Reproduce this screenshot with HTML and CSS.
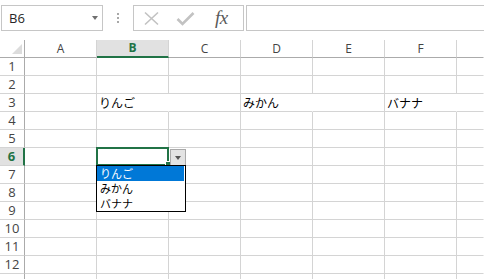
FILE: index.html
```html
<!DOCTYPE html>
<html lang="ja">
<head>
<meta charset="utf-8">
<link rel="stylesheet" href="styles.css">
</head>
<body>
<div class="fbar">
  <div class="namebox"><span class="nb-text">B6</span><span class="nb-caret"></span></div>
  <div class="grip"><i></i><i></i><i></i></div>
  <div class="fbtns">
    <svg class="ic-x" width="17" height="15" viewBox="0 0 17 15"><path d="M2 1.5 L15 13.5 M15 1.5 L2 13.5" stroke="#c2c2c2" stroke-width="1.6" fill="none"/></svg>
    <svg class="ic-ok" width="19" height="15" viewBox="0 0 19 15"><path d="M1.5 8 L6.5 13 L17.5 2" stroke="#c2c2c2" stroke-width="2.6" fill="none"/></svg>
    <span class="fx">fx</span>
  </div>
  <div class="finput"></div>
</div>
<div class="sheet">
  <div class="c corner"><span class="tri"></span></div>
  <div class="c ch">A</div><div class="c ch sel">B</div><div class="c ch">C</div><div class="c ch">D</div><div class="c ch">E</div><div class="c ch">F</div><div class="c ch"></div>

  <div class="c rh">1</div><div class="c"></div><div class="c"></div><div class="c"></div><div class="c"></div><div class="c"></div><div class="c"></div><div class="c"></div>
  <div class="c rh">2</div><div class="c"></div><div class="c"></div><div class="c"></div><div class="c"></div><div class="c"></div><div class="c"></div><div class="c"></div>
  <div class="c rh">3</div><div class="c"></div><div class="c nr">りんご</div><div class="c"></div><div class="c nr">みかん</div><div class="c"></div><div class="c nr">バナナ</div><div class="c"></div>
  <div class="c rh">4</div><div class="c"></div><div class="c"></div><div class="c"></div><div class="c"></div><div class="c"></div><div class="c"></div><div class="c"></div>
  <div class="c rh">5</div><div class="c"></div><div class="c"></div><div class="c"></div><div class="c"></div><div class="c"></div><div class="c"></div><div class="c"></div>
  <div class="c rh sel">6</div><div class="c"></div><div class="c"></div><div class="c"></div><div class="c"></div><div class="c"></div><div class="c"></div><div class="c"></div>
  <div class="c rh">7</div><div class="c"></div><div class="c"></div><div class="c"></div><div class="c"></div><div class="c"></div><div class="c"></div><div class="c"></div>
  <div class="c rh">8</div><div class="c"></div><div class="c"></div><div class="c"></div><div class="c"></div><div class="c"></div><div class="c"></div><div class="c"></div>
  <div class="c rh">9</div><div class="c"></div><div class="c"></div><div class="c"></div><div class="c"></div><div class="c"></div><div class="c"></div><div class="c"></div>
  <div class="c rh">10</div><div class="c"></div><div class="c"></div><div class="c"></div><div class="c"></div><div class="c"></div><div class="c"></div><div class="c"></div>
  <div class="c rh">11</div><div class="c"></div><div class="c"></div><div class="c"></div><div class="c"></div><div class="c"></div><div class="c"></div><div class="c"></div>
  <div class="c rh">12</div><div class="c"></div><div class="c"></div><div class="c"></div><div class="c"></div><div class="c"></div><div class="c"></div><div class="c"></div>
  <div class="c rh"></div><div class="c"></div><div class="c"></div><div class="c"></div><div class="c"></div><div class="c"></div><div class="c"></div><div class="c"></div>

  <div class="selbox"></div>
  <div class="handle"></div>
  <div class="ddbtn"><span class="ddarrow"></span></div>
  <div class="ddlist">
    <div class="item hl">りんご</div>
    <div class="item">みかん</div>
    <div class="item">バナナ</div>
  </div>
</div>
</body>
</html>
```
FILE: styles.css
```css
html, body {
  margin: 0;
  padding: 0;
  background: #fff;
}
body {
  width: 484px;
  height: 279px;
  overflow: hidden;
  font-family: "Open Sans", "Liberation Sans", sans-serif;
}

/* formula bar */
.fbar {
  display: flex;
  align-items: flex-start;
  height: 40px;
  padding-top: 5px;
  box-sizing: border-box;
  width: 484px;
}
.namebox {
  margin-left: 1px;
  width: 102px;
  height: 26px;
  flex: none;
  box-sizing: border-box;
  border: 1px solid #c6c6c6;
  display: flex;
  align-items: center;
  justify-content: space-between;
  padding: 0 4px 0 7px;
}
.nb-text {
  font-size: 13px;
  line-height: 24px;
  color: #262626;
}
.nb-caret {
  width: 0;
  height: 0;
  border-left: 3.5px solid transparent;
  border-right: 3.5px solid transparent;
  border-top: 4px solid #707070;
}
.grip {
  width: 30px;
  flex: none;
  display: flex;
  flex-direction: column;
  align-items: center;
  gap: 2px;
  padding-top: 8px;
}
.grip i {
  display: block;
  width: 2px;
  height: 2px;
  background: #a8a8a8;
}
.fbtns {
  width: 111px;
  height: 26px;
  flex: none;
  box-sizing: border-box;
  border: 1px solid #c6c6c6;
  display: flex;
  align-items: center;
  padding-left: 9px;
}
.ic-x { display: block; margin-top: 1px; }
.ic-ok { display: block; margin-left: 16px; margin-top: 1px; }
.fx {
  margin-left: 20px;
  font-family: "Liberation Serif", serif;
  font-style: italic;
  font-size: 19px;
  line-height: 24px;
  color: #5a5a5a;
  letter-spacing: -0.5px;
}
.finput {
  margin-left: 2px;
  flex: 1;
  height: 26px;
  box-sizing: border-box;
  border: 1px solid #c6c6c6;
  border-right: none;
}

/* sheet grid */
.sheet {
  position: relative;
  width: 484px;
  height: 239px;
  overflow: hidden;
  display: grid;
  grid-template-columns: 25px repeat(6, 72px) 1fr;
  grid-auto-rows: 18px;
}
.c {
  box-sizing: border-box;
  border-right: 1px solid #d4d4d4;
  border-bottom: 1px solid #d4d4d4;
  font-family: "Noto Sans CJK JP", sans-serif;
  font-size: 12px;
  line-height: 17px;
  padding-left: 2px;
  white-space: nowrap;
  color: #000;
}
.sheet > .c:nth-child(8n) {
  border-right-color: transparent;
}
.nr {
  border-right-color: transparent;
}
.corner {
  position: relative;
  border-right-color: #ababab;
  border-bottom-color: #ababab;
}
.tri {
  position: absolute;
  right: 2px;
  bottom: 3px;
  width: 0;
  height: 0;
  border-left: 10px solid transparent;
  border-bottom: 10px solid #dcdcdc;
}
.ch {
  border-bottom-color: #ababab;
  text-align: center;
  font-family: "Open Sans", sans-serif;
  font-size: 12px;
  color: #444;
  padding-left: 0;
}
.ch.sel {
  background: #e1e1e1;
  color: #217346;
  font-weight: bold;
  border-bottom: 2px solid #217346;
  line-height: 16px;
}
.rh {
  border-right-color: #ababab;
  text-align: center;
  font-family: "Open Sans", sans-serif;
  font-size: 13px;
  color: #444;
  padding-left: 0;
}
.rh.sel {
  background: #e1e1e1;
  color: #217346;
  font-weight: bold;
  border-right: 2px solid #217346;
}

/* selection & data validation dropdown */
.selbox {
  position: absolute;
  left: 96px;
  top: 107px;
  width: 73px;
  height: 19px;
  box-sizing: border-box;
  border: 2px solid #217346;
}
.handle {
  position: absolute;
  left: 165px;
  top: 121px;
  width: 5px;
  height: 5px;
  background: #217346;
  border-left: 1px solid #fff;
  border-top: 1px solid #fff;
}
.ddbtn {
  position: absolute;
  left: 170px;
  top: 109px;
  width: 16px;
  height: 17px;
  box-sizing: border-box;
  background: #e3e3e3;
  border: 1px solid #a9a9a9;
  display: flex;
  align-items: center;
  justify-content: center;
}
.ddarrow {
  width: 0;
  height: 0;
  border-left: 3.5px solid transparent;
  border-right: 3.5px solid transparent;
  border-top: 4px solid #555;
}
.ddlist {
  position: absolute;
  left: 96px;
  top: 125px;
  width: 90px;
  height: 47px;
  box-sizing: border-box;
  border: 1px solid #000;
  background: #fff;
  font-family: "Noto Sans CJK JP", sans-serif;
  font-size: 11px;
}
.item {
  height: 15px;
  line-height: 15px;
  padding-left: 3px;
  white-space: nowrap;
}
.item.hl {
  background: #0078d7;
  color: #fff;
  margin-right: 1px;
}
```
